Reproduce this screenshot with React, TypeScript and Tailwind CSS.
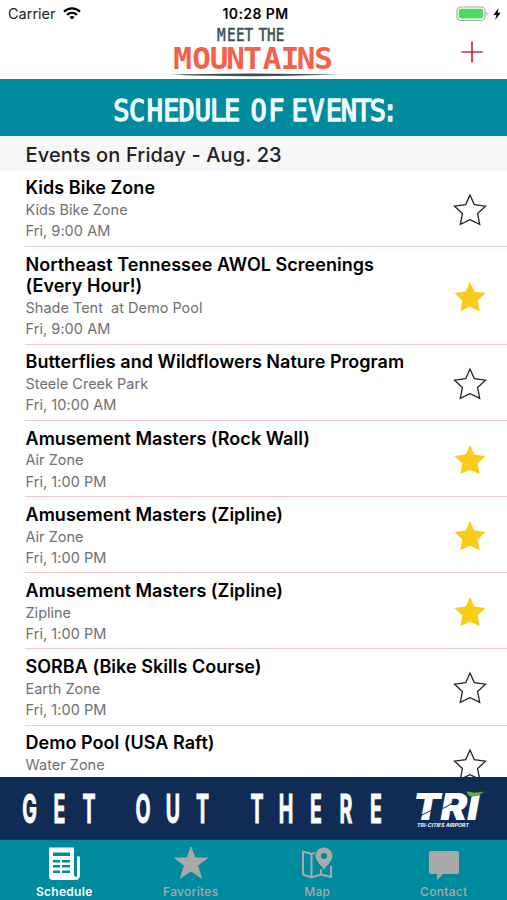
const events = [
  { title: 'Kids Bike Zone', place: 'Kids Bike Zone', time: 'Fri, 9:00 AM', favorite: false },
  { title: 'Northeast Tennessee AWOL Screenings (Every Hour!)', place: 'Shade Tent  at Demo Pool', time: 'Fri, 9:00 AM', favorite: true },
  { title: 'Butterflies and Wildflowers Nature Program', place: 'Steele Creek Park', time: 'Fri, 10:00 AM', favorite: false },
  { title: 'Amusement Masters (Rock Wall)', place: 'Air Zone', time: 'Fri, 1:00 PM', favorite: true },
  { title: 'Amusement Masters (Zipline)', place: 'Air Zone', time: 'Fri, 1:00 PM', favorite: true },
  { title: 'Amusement Masters (Zipline)', place: 'Zipline', time: 'Fri, 1:00 PM', favorite: true },
  { title: 'SORBA (Bike Skills Course)', place: 'Earth Zone', time: 'Fri, 1:00 PM', favorite: false },
  { title: 'Demo Pool (USA Raft)', place: 'Water Zone', time: 'Fri, 1:00 PM', favorite: false },
]

const display = "'DejaVu Sans Mono', monospace"
const sans = "Inter, 'Liberation Sans', sans-serif"

function Star({ filled }: { filled: boolean }) {
  return (
    <svg width="34" height="34" viewBox="0 0 34 34">
      <path
        d="M17 2L21.3 11.6L32.5 13.1L24.6 20.5L26.7 31.3L17 26.7L7.3 31.3L9.4 20.5L1.5 13.1L12.7 11.6Z"
        fill={filled ? '#facb17' : 'none'}
        stroke={filled ? 'none' : '#222'}
        strokeWidth="1.3"
      />
    </svg>
  )
}

function StatusBar() {
  return (
    <div className="flex h-7 items-center justify-between pl-2 pr-1.5">
      <div className="flex w-40 items-center gap-[7px] text-[14.5px] text-[#222]">
        <span>Carrier</span>
        <svg width="18" height="13" viewBox="0 0 18 13" fill="none" stroke="#000" strokeWidth="2.3" className="-mt-0.5">
          <path d="M1 4.6C5.6 .3 12.4 .3 17 4.6" />
          <path d="M4 7.8C7 5.2 11 5.2 14 7.8" />
          <path d="M6.4 9.9C8 8.7 10 8.7 11.6 9.9L9 12.6Z" fill="#000" stroke="none" />
        </svg>
      </div>
      <span className="-mt-0.5 pl-0.5 text-[14px] font-semibold tracking-[0.4px]">10:28 PM</span>
      <div className="flex w-40 items-center justify-end gap-1">
        <svg width="33" height="16" viewBox="0 0 33 16">
          <rect x="1" y="1" width="28" height="13.5" rx="4" fill="#fff" stroke="#a9a9a9" strokeWidth="1.2" />
          <rect x="2.8" y="2.8" width="24.4" height="9.8" rx="2" fill="#4cd964" />
          <path d="M30.5 5.5Q33 7.7 30.5 10Z" fill="#a9a9a9" />
        </svg>
        <svg width="8" height="12" viewBox="0 0 8 12">
          <path d="M5.6 0L.4 6.9H3.4L2.2 12L7.7 4.8H4.6Z" />
        </svg>
      </div>
    </div>
  )
}

function Logo() {
  return (
    <svg width="176" height="51" viewBox="166 28 176 51" fontFamily={display} textAnchor="middle" strokeLinejoin="round" overflow="visible">
      <g transform="scale(.82 1)">
        <text y="41.500" x="270 282 293 303.500 311 320.500 331 341.500" fontSize="17.500" fill="#3c4f57" stroke="#3c4f57" strokeWidth=".5">MEET THE</text>
      </g>
      <text y="69" x="182.5 201.5 219 235.5 252.5 272 290 306 323.5" fontSize="31" fontWeight="700" fill="#f4614a">MOUNTAINS</text>
      <path d="M168 74.6Q200 73.6 250 73.4Q300 73.6 339 74.6Q300 76 250 76.2Q200 76 168 74.6Z" fill="#3c4f57" />
    </svg>
  )
}

function Banner() {
  return (
    <svg width="507" height="63" viewBox="0 777 507 63" className="block shrink-0 bg-[#102c54]">
      <g transform="scale(.5 1)" fontFamily={sans} fontSize="39" fontWeight="700" fill="#fff" stroke="#fff" strokeWidth="1" textAnchor="middle">
        <text y="823" x="59 119 178 232 286 346 405 459 514 572 632 692 752">GET OUT THERE</text>
      </g>
      <g fill="#fff" fontFamily={sans} fontStyle="italic">
        <text x="413" y="819.5" fontSize="37" fontWeight="900" textLength="66" lengthAdjust="spacingAndGlyphs">TRI</text>
        <text x="417" y="826.5" fontSize="4.5" fontWeight="700" textLength="52" lengthAdjust="spacingAndGlyphs">TRI-CITIES AIRPORT</text>
      </g>
      <path d="M418 817L432 810L444 808L458 800" fill="none" stroke="#102c54" strokeWidth="1" />
      <path d="M466 791L474 792.5L485 791.5L478 795.5L469 796.5Z" fill="#63b52f" stroke="#102c54" strokeWidth=".4" />
    </svg>
  )
}

function TabBar() {
  return (
    <nav className="grid h-[60px] shrink-0 grid-cols-4 bg-[#008a9e] pl-px text-[12px] font-medium tracking-[0.3px] text-[#a9a9a9]">
      <div className="flex flex-col items-center pt-1.5 font-semibold text-white">
        <svg width="32" height="36" viewBox="0 0 32 36" fill="currentColor" className="mb-px">
          <path fillRule="evenodd" d="M1 1.5H26V28Q26 31 28 31Q29 31 29 29V10.5H32V29Q32 34 27 34H5Q1 34 1 30ZM5 6.5H22V10H5ZM5 14H12V16.5H5ZM14 14H22V16.5H14ZM5 19H12V21.5H5ZM14 19H22V21.5H14ZM5 24.5H12V27H5ZM14 24.5H22V27H14Z" />
        </svg>
        <span>Schedule</span>
      </div>
      <div className="flex flex-col items-center pt-1.5">
        <svg width="34" height="36" viewBox="0 0 34 36" fill="currentColor" className="mb-px">
          <path d="M17 1L21 12H33.5L23.5 19.5L27.5 32L17 25L6.5 32L10.5 19.5L.5 12H13Z" stroke="currentColor" strokeLinejoin="round" />
        </svg>
        <span>Favorites</span>
      </div>
      <div className="flex flex-col items-center pt-1.5">
        <svg width="32" height="36" viewBox="0 0 32 36" fill="currentColor" className="mb-px">
          <path d="M14 7L10.5 8L2 5.5V28.5L10.5 31.5L20 28.5L30 31V20M10.5 8V31M20 23V28.5" fill="none" stroke="currentColor" strokeWidth="2" />
          <path fillRule="evenodd" d="M23 1.5A8.5 8.5 0 0 1 31.5 10C31.5 15 25 20 23 24C21 20 14.5 15 14.5 10A8.5 8.5 0 0 1 23 1.5ZM23 7A3 3 0 1 0 23 13A3 3 0 1 0 23 7Z" />
        </svg>
        <span>Map</span>
      </div>
      <div className="flex flex-col items-center pt-1.5">
        <svg width="32" height="36" viewBox="0 0 32 36" fill="currentColor" className="mb-px">
          <path d="M3 5H29Q31 5 31 7V26Q31 28 29 28H15L9 34V28H3Q1 28 1 26V7Q1 5 3 5Z" />
        </svg>
        <span>Contact</span>
      </div>
    </nav>
  )
}

export default function App() {
  return (
    <div className="flex h-[900px] w-[507px] flex-col overflow-hidden bg-white font-[Inter,'Liberation_Sans',sans-serif] text-black">
      <header className="h-[79px] shrink-0">
        <StatusBar />
        <div className="grid grid-cols-[1fr_176px_1fr]">
          <div />
          <Logo />
          <div className="flex justify-end pr-6 pt-[13px]">
            <svg width="22" height="22" viewBox="0 0 22 22" stroke="#d0273f" strokeWidth="1.7">
              <path d="M11 .5V21.5M.5 11H21.5" />
            </svg>
          </div>
        </div>
      </header>
      <div className="h-[57px] shrink-0 bg-[#008a9e]">
        <svg width="507" height="57" viewBox="0 79 507 57" fontFamily={display} fontSize="30" fill="#effdff" stroke="#effdff" strokeWidth="1.3" strokeLinejoin="round" textAnchor="middle">
          <g transform="scale(.9 1)">
            <text
              y="121"
              x="135 152.5 172 190.5 207.5 225.5 242.5 258 270 287.5 307 320 333 351.5 371 387.5 404 420 433.5"
            >
              SCHEDULE OF EVENTS:
            </text>
          </g>
        </svg>
      </div>
      <h2 className="h-[34.5px] shrink-0 bg-[#f7f7f7] pl-[25.5px] text-[20px] font-medium leading-[38px] tracking-[0.13px] text-[#222]">Events on Friday - Aug. 23</h2>
      <main className="min-h-0 flex-1 overflow-hidden">
        {events.map((event, i) => (
          <div key={i} className="ml-[25px] flex items-center justify-between border-b border-[#f3c9cc] pb-[3.8px] pl-[0.5px] pr-5 pt-[6.9px]">
            <div className="w-[400px]">
              <h3 className="text-[18px] font-semibold leading-[21.7px] tracking-[0.03px]">{event.title}</h3>
              <p className="whitespace-pre text-[14.5px] leading-[21.2px] text-[#707070]">{event.place}</p>
              <p className="text-[14.5px] leading-[21.6px] tracking-[0.05px] text-[#707070]">{event.time}</p>
            </div>
            <Star filled={event.favorite} />
          </div>
        ))}
      </main>
      <Banner />
      <TabBar />
    </div>
  )
}
